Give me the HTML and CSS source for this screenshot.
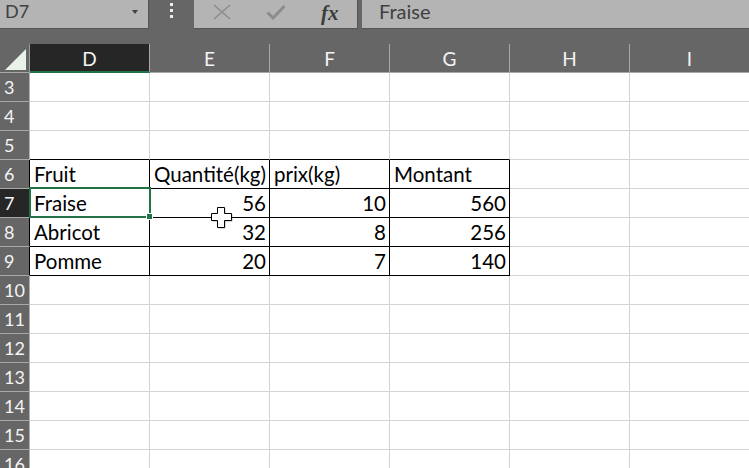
FILE: index.html
```html
<!DOCTYPE html>
<html lang="fr">
<head>
<meta charset="utf-8">
<title>Excel</title>
<link rel="stylesheet" href="styles.css">
</head>
<body>
<div class="app">
  <div class="topbar">
    <div class="namebox">
      <span class="nb-text">D7</span>
      <span class="nb-arrow"></span>
    </div>
    <div class="grip"><span></span><span></span><span></span></div>
    <div class="fxbox">
      <svg class="ic-x" width="20" height="16" viewBox="0 0 20 16"><path d="M2 1 L18 15 M18 1 L2 15" stroke="#8c8c8c" stroke-width="1.6" fill="none"/></svg>
      <svg class="ic-check" width="20" height="16" viewBox="0 0 20 16"><path d="M1.5 8.5 L7 14 L18.5 2" stroke="#8c8c8c" stroke-width="3" fill="none"/></svg>
      <span class="ic-fx">fx</span>
    </div>
    <div class="formula">Fraise</div>
  </div>
  <div class="sheet">
    <div class="corner"><span class="tri"></span></div>
    <div class="ch sel-col">D</div>
    <div class="ch">E</div>
    <div class="ch">F</div>
    <div class="ch">G</div>
    <div class="ch">H</div>
    <div class="ch">I</div>

    <div class="rh">3</div><div class="c"></div><div class="c"></div><div class="c"></div><div class="c"></div><div class="c"></div><div class="c"></div>
    <div class="rh">4</div><div class="c"></div><div class="c"></div><div class="c"></div><div class="c"></div><div class="c"></div><div class="c"></div>
    <div class="rh">5</div><div class="c tb"></div><div class="c tb"></div><div class="c tb"></div><div class="c tb"></div><div class="c"></div><div class="c"></div>

    <div class="rh rb">6</div><div class="c t">Fruit</div><div class="c t">Quantité(kg)</div><div class="c t">prix(kg)</div><div class="c t">Montant</div><div class="c"></div><div class="c"></div>
    <div class="rh rb sel-row">7</div><div class="c t sel">Fraise<span class="selbox"></span><span class="handle"></span></div><div class="c t n">56</div><div class="c t n">10</div><div class="c t n">560</div><div class="c"></div><div class="c"></div>
    <div class="rh rb">8</div><div class="c t">Abricot</div><div class="c t n">32</div><div class="c t n">8</div><div class="c t n">256</div><div class="c"></div><div class="c"></div>
    <div class="rh rb">9</div><div class="c t">Pomme</div><div class="c t n">20</div><div class="c t n">7</div><div class="c t n">140</div><div class="c"></div><div class="c"></div>

    <div class="rh">10</div><div class="c"></div><div class="c"></div><div class="c"></div><div class="c"></div><div class="c"></div><div class="c"></div>
    <div class="rh">11</div><div class="c"></div><div class="c"></div><div class="c"></div><div class="c"></div><div class="c"></div><div class="c"></div>
    <div class="rh">12</div><div class="c"></div><div class="c"></div><div class="c"></div><div class="c"></div><div class="c"></div><div class="c"></div>
    <div class="rh">13</div><div class="c"></div><div class="c"></div><div class="c"></div><div class="c"></div><div class="c"></div><div class="c"></div>
    <div class="rh">14</div><div class="c"></div><div class="c"></div><div class="c"></div><div class="c"></div><div class="c"></div><div class="c"></div>
    <div class="rh">15</div><div class="c"></div><div class="c"></div><div class="c"></div><div class="c"></div><div class="c"></div><div class="c"></div>
    <div class="rh">16</div><div class="c"></div><div class="c"></div><div class="c"></div><div class="c"></div><div class="c"></div><div class="c"></div>
  </div>
  <svg class="cursor" width="24" height="24" viewBox="0 0 24 24"><path d="M8.5 2.5 H15.5 V8.5 H22.5 V15.5 H15.5 V22.5 H8.5 V15.5 H2.5 V8.5 H8.5 Z" fill="#555" opacity="0.45"/><path d="M7.5 1.5 H14.5 V7.5 H21.5 V14.5 H14.5 V21.5 H7.5 V14.5 H1.5 V7.5 H7.5 Z" fill="#fff" stroke="#000" stroke-width="1"/></svg>
</div>
</body>
</html>
```
FILE: styles.css
```css
* { box-sizing: border-box; }
html, body { margin: 0; padding: 0; }
body {
  width: 749px;
  height: 468px;
  overflow: hidden;
  background: #666666;
  font-family: Lato, "Liberation Sans", sans-serif;
}
.app { position: relative; width: 749px; height: 468px; overflow: hidden; }

.topbar {
  display: flex;
  height: 29px;
  margin-bottom: 15px;
}
.namebox {
  width: 149px;
  background: #b4b4b4;
  border-right: 1px solid #555;
  border-bottom: 1px solid #555;
  display: flex;
  align-items: flex-start;
  justify-content: space-between;
  padding: 1px 10px 0 5px;
}
.nb-text { font-size: 18px; line-height: 20px; color: #404040; }
.nb-arrow {
  margin-top: 9px;
  width: 0; height: 0;
  border-left: 3.5px solid transparent;
  border-right: 3.5px solid transparent;
  border-top: 4px solid #404040;
}
.grip {
  width: 45px;
  display: flex;
  flex-direction: column;
  align-items: center;
  gap: 3px;
  padding-top: 3px;
}
.grip span { width: 3px; height: 3px; background: #e8f0e8; }
.fxbox {
  width: 164px;
  background: #b4b4b4;
  border-right: 1px solid #555;
  border-bottom: 1px solid #555;
  display: flex;
  align-items: flex-start;
  padding: 3px 0 0 18px;
}
.ic-x { margin-top: 1px; }
.ic-check { margin-left: 34px; margin-top: 1px; }
.ic-fx {
  margin-left: 35px;
  font-family: "Liberation Serif", serif;
  font-style: italic;
  font-weight: bold;
  font-size: 21px;
  line-height: 20px;
  color: #3c3c3c;
}
.formula {
  flex: 1;
  margin-left: 4px;
  background: #b4b4b4;
  border-bottom: 1px solid #555;
  font-size: 20px;
  line-height: 20px;
  color: #404040;
  padding: 1px 0 0 17px;
}

.sheet {
  display: grid;
  grid-template-columns: 30px repeat(6, 120px);
  grid-auto-rows: 29px;
  background: #fff;
}
.corner {
  background: #666;
  border-right: 1px solid #9a9a9a;
  border-bottom: 1px solid #a8a8a8;
  position: relative;
}
.tri {
  position: absolute;
  left: 5px; top: 5px;
  width: 0; height: 0;
  border-left: 21px solid transparent;
  border-bottom: 21px solid #e8f2e8;
}
.ch {
  background: #666;
  color: #f4f4f4;
  font-size: 19px;
  line-height: 24px;
  text-align: center;
  padding-top: 3px;
  border-right: 1px solid #a8a8a8;
  border-bottom: 1px solid #a8a8a8;
}
.ch.sel-col {
  background: #262626;
  border-bottom: 2px solid #217346;
  border-right-color: #a8a8a8;
}
.rh {
  background: #666;
  color: #f4f4f4;
  font-size: 18px;
  line-height: 24px;
  padding: 2px 0 0 4px;
  border-right: 1px solid #b0b0b0;
  border-bottom: 1px solid #a8a8a8;
}
.rh.rb { border-right-color: #000; }
.rh.sel-row { background: #262626; }
.c {
  background: #fff;
  border-right: 1px solid #d4d4d4;
  border-bottom: 1px solid #d4d4d4;
  font-size: 20.5px;
  line-height: 24px;
  color: #000;
  padding: 2px 3px 0 4px;
  white-space: nowrap;
  overflow: visible;
}
.c.tb { border-bottom-color: #000; }
.c.t { border-right-color: #000; border-bottom-color: #000; }
.c.n { text-align: right; }
.c.sel { position: relative; }
.selbox {
  position: absolute;
  left: -1px; top: -2px;
  width: 122px; height: 31px;
  border: 2px solid #217346;
  pointer-events: none;
}
.handle {
  position: absolute;
  left: 116px; top: 24px;
  width: 7px; height: 7px;
  background: #217346;
  border: 1px solid #fff;
}
.cursor {
  position: absolute;
  left: 210px;
  top: 206px;
}
```
